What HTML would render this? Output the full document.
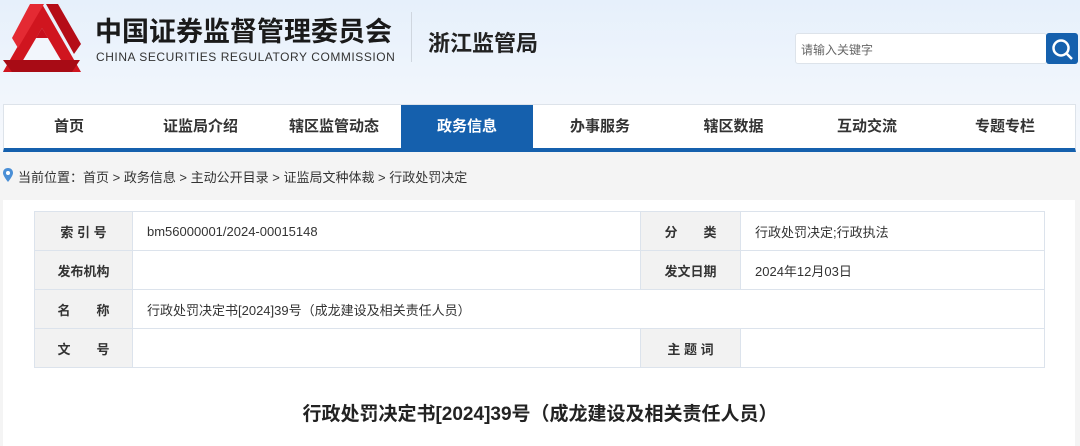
<!DOCTYPE html>
<html><head><meta charset="utf-8"><style>
*{margin:0;padding:0;box-sizing:border-box}
body{width:1080px;height:446px;overflow:hidden;font-family:"Liberation Sans","Noto Sans CJK SC",sans-serif;background:#f4f4f4;position:relative}
.hdr{position:absolute;left:0;top:0;width:1080px;height:152px;background:linear-gradient(#e6f0fb,#f7f9fd)}
.t1{position:absolute;left:95px;top:10px;font-size:27px;font-weight:bold;color:#1a1a1a;white-space:nowrap}
.t2{position:absolute;left:96px;top:50px;font-size:12px;color:#333;letter-spacing:0.55px;white-space:nowrap}
.sep{position:absolute;left:411px;top:12px;width:1px;height:50px;background:#cfd6df}
.t3{position:absolute;left:428px;top:26px;font-size:22px;font-weight:bold;color:#222}
.search{position:absolute;left:795px;top:33px;width:252px;height:31px;background:#fff;border:1px solid #dde3ea;border-radius:3px;font-size:12px;color:#666;padding:7px 0 0 5px}
.sbtn{position:absolute;left:1046px;top:33px;width:32px;height:31px;background:#1560ad;border-radius:3px}
.nav{position:absolute;left:3px;top:104px;width:1073px;height:48px;background:#fff;border:1px solid #dde3ea;border-bottom:4px solid #1560ad}
.nav div{position:absolute;top:0;height:44px;line-height:44px;font-size:15px;font-weight:bold;color:#333;text-align:center}
.nav .on{background:#1560ad;color:#fff}
.crumb{position:absolute;left:0;top:152px;width:1080px;height:48px;background:#f4f4f4;font-size:13px;color:#333;padding:15px 0 0 18px}
.main{position:absolute;left:3px;top:200px;width:1072px;height:246px;background:#fff}
table{position:absolute;left:34px;top:211px;border-collapse:collapse;font-size:13px;color:#333}
td{border:1px solid #dce3ec;height:39px;padding:0 14px}
td.l{background:#f2f2f2;font-weight:bold;text-align:center;width:98px;padding:0}
.title{position:absolute;left:0;width:1080px;top:399px;text-align:center;font-size:19px;font-weight:bold;color:#222}
</style></head><body>
<div class="hdr">
<svg style="position:absolute;left:2px;top:2px" width="80" height="72" viewBox="0 0 80 72">
<polygon points="40,2 79,70 1,70" fill="#d0151f"/>
<polygon points="40,26 60,60 20,60" fill="#f2f6fc"/>
<polygon points="28,2 42,2 16,46 10,36" fill="#e42a33"/>
<polygon points="44,2 56,2 79,42 72,52" fill="#b50c17"/>
<polygon points="1,58 10,70 70,70 78,58" fill="#a80b15"/>
<polygon points="40,26 46,36 34,36" fill="#c8101e"/>
</svg>
<div class="t1">中国证券监督管理委员会</div>
<div class="t2">CHINA SECURITIES REGULATORY COMMISSION</div>
<div class="sep"></div>
<div class="t3">浙江监管局</div>
<div class="search">请输入关键字</div>
<div class="sbtn"><svg width="32" height="31"><circle cx="15" cy="15" r="7.5" fill="none" stroke="#fff" stroke-width="2.5"/><line x1="21" y1="21" x2="26" y2="26" stroke="#fff" stroke-width="2.5"/></svg></div>
</div>
<div class="nav">
<div style="left:0;width:130px">首页</div>
<div style="left:130px;width:133px">证监局介绍</div>
<div style="left:263px;width:134px">辖区监管动态</div>
<div class="on" style="left:397px;width:132px">政务信息</div>
<div style="left:529px;width:134px">办事服务</div>
<div style="left:663px;width:133px">辖区数据</div>
<div style="left:796px;width:134px">互动交流</div>
<div style="left:930px;width:142px">专题专栏</div>
</div>
<div class="crumb"><svg style="position:absolute;left:3px;top:16px" width="10" height="14"><path d="M5 0C2 0 0 2 0 5c0 3 5 9 5 9s5-6 5-9C10 2 8 0 5 0z" fill="#4a8fd6"/><circle cx="5" cy="5" r="2" fill="#fff"/></svg>当前位置：首页 &gt; 政务信息 &gt; 主动公开目录 &gt; 证监局文种体裁 &gt; 行政处罚决定</div>
<div class="main"></div>
<table>
<tr><td class="l">索 引 号</td><td style="width:508px">bm56000001/2024-00015148</td><td class="l" style="width:100px">分　　类</td><td style="width:304px">行政处罚决定;行政执法</td></tr>
<tr><td class="l">发布机构</td><td></td><td class="l">发文日期</td><td>2024年12月03日</td></tr>
<tr><td class="l">名　　称</td><td colspan="3">行政处罚决定书[2024]39号（成龙建设及相关责任人员）</td></tr>
<tr><td class="l">文　　号</td><td></td><td class="l">主 题 词</td><td></td></tr>
</table>
<div class="title">行政处罚决定书[2024]39号（成龙建设及相关责任人员）</div>
</body></html>
